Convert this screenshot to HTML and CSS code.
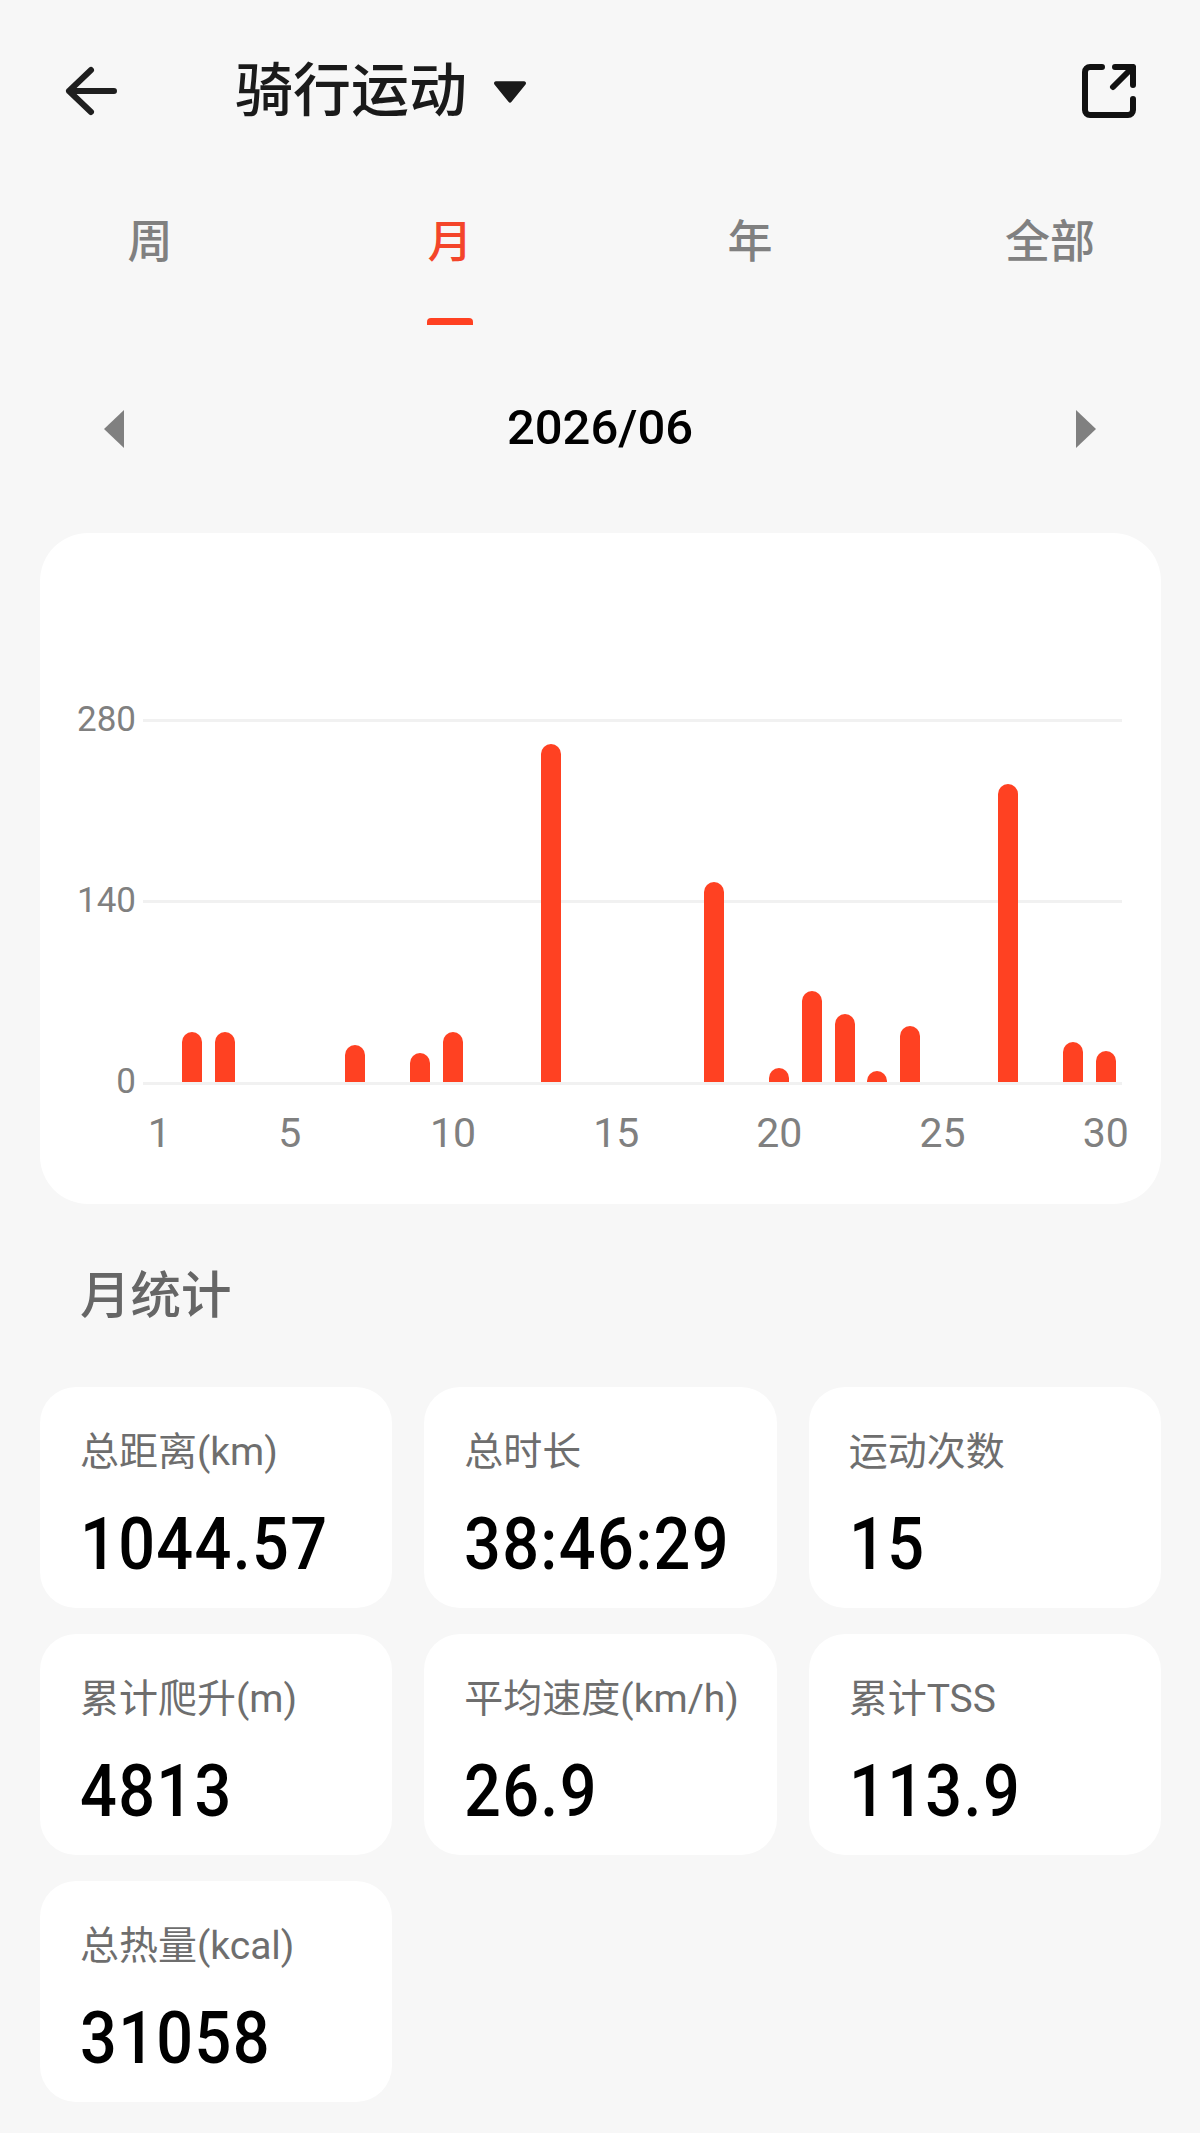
FILE: index.html
```html
<!DOCTYPE html>
<html lang="zh-CN">
  <head>
    <meta http-equiv="Content-Type" content="text/html;charset=UTF-8" />
    <title>骑行运动</title>
    <link rel="stylesheet" href="styles.css">
  </head>
  <body>
    <header class="top-bar">
      <svg class="back-icon" viewBox="0 0 57 54" aria-hidden="true">
        <path d="M28 6 L6 27 L28 48 M6 27 H51" />
      </svg>
      <h1 class="sport-title">骑行运动</h1>
      <svg class="caret-icon" viewBox="0 0 33 24" aria-hidden="true">
        <path d="M3 2 H30 a2 2 0 0 1 1.600 3.200 L18 22 a2 2 0 0 1-3 0 L1.400 5.200 A2 2 0 0 1 3 2 Z" />
      </svg>
      <svg class="share-icon" viewBox="0 0 54 54" aria-hidden="true">
        <path d="M20 3 H8 a5 5 0 0 0-5 5 V46 a5 5 0 0 0 5 5 H46 a5 5 0 0 0 5-5 V35 M33 3 H51 V21 M51 3 L31 23" />
      </svg>
    </header>

    <nav class="tabs">
      <div class="tab">周</div>
      <div class="tab tab-active">月<span class="tab-mark"></span></div>
      <div class="tab">年</div>
      <div class="tab">全部</div>
    </nav>

    <div class="date-row">
      <svg class="date-arrow" viewBox="0 0 20 38" aria-hidden="true"><path d="M20 0 V38 L0 19 Z" /></svg>
      <span class="date-text">2026/06</span>
      <svg class="date-arrow" viewBox="0 0 20 38" aria-hidden="true"><path d="M0 0 V38 L20 19 Z" /></svg>
    </div>

    <section class="chart-card">
      <div class="plot">
        <div class="axis-row"><span class="axis-label">280</span><span class="axis-line"></span></div>
        <div class="axis-row"><span class="axis-label">140</span><span class="axis-line"></span></div>
        <div class="axis-row"><span class="axis-label">0</span><span class="axis-line"></span></div>

        <div class="bars">
          <span class="bar"></span>
          <span class="bar" style="height: 49.5px"></span>
          <span class="bar" style="height: 49.5px"></span>
          <span class="bar"></span>
          <span class="bar"></span>
          <span class="bar"></span>
          <span class="bar" style="height: 36.5px"></span>
          <span class="bar"></span>
          <span class="bar" style="height: 28.5px"></span>
          <span class="bar" style="height: 49.5px"></span>
          <span class="bar"></span>
          <span class="bar"></span>
          <span class="bar" style="height: 337.5px"></span>
          <span class="bar"></span>
          <span class="bar"></span>
          <span class="bar"></span>
          <span class="bar"></span>
          <span class="bar" style="height: 200px"></span>
          <span class="bar"></span>
          <span class="bar" style="height: 13.5px"></span>
          <span class="bar" style="height: 91px"></span>
          <span class="bar" style="height: 67.5px"></span>
          <span class="bar" style="height: 10.5px"></span>
          <span class="bar" style="height: 55.5px"></span>
          <span class="bar"></span>
          <span class="bar"></span>
          <span class="bar" style="height: 297.5px"></span>
          <span class="bar"></span>
          <span class="bar" style="height: 39.5px"></span>
          <span class="bar" style="height: 30.5px"></span>
        </div>
      </div>

      <div class="days">
        <span class="day" style="grid-column: 1">1</span>
        <span class="day" style="grid-column: 5">5</span>
        <span class="day" style="grid-column: 10">10</span>
        <span class="day" style="grid-column: 15">15</span>
        <span class="day" style="grid-column: 20">20</span>
        <span class="day" style="grid-column: 25">25</span>
        <span class="day" style="grid-column: 30">30</span>
      </div>
    </section>

    <h2 class="section-title">月统计</h2>

    <main class="stats">
      <div class="stat-card">
        <div class="stat-label">总距离(km)</div>
        <div class="stat-value">1044.57</div>
      </div>
      <div class="stat-card">
        <div class="stat-label">总时长</div>
        <div class="stat-value">38:46:29</div>
      </div>
      <div class="stat-card">
        <div class="stat-label">运动次数</div>
        <div class="stat-value">15</div>
      </div>
      <div class="stat-card">
        <div class="stat-label">累计爬升(m)</div>
        <div class="stat-value">4813</div>
      </div>
      <div class="stat-card">
        <div class="stat-label">平均速度(km/h)</div>
        <div class="stat-value">26.9</div>
      </div>
      <div class="stat-card">
        <div class="stat-label">累计TSS</div>
        <div class="stat-value">113.9</div>
      </div>
      <div class="stat-card">
        <div class="stat-label">总热量(kcal)</div>
        <div class="stat-value">31058</div>
      </div>
    </main>
  </body>
</html>
```

FILE: styles.css
```css
/* Cycling stats page */

* {
  margin: 0;
  padding: 0;
  box-sizing: border-box;
}

body {
  font-family: Roboto, 'Noto Sans CJK SC', sans-serif;
  background: #f7f7f7;
  padding-bottom: 32px;
}

/* Top bar */
.top-bar {
  display: flex;
  align-items: center;
  height: 182px;
  padding: 0 64px 0 63px;
}

.back-icon {
  width: 57px;
  height: 54px;
  fill: none;
  stroke: #1f1f1f;
  stroke-width: 6;
  stroke-linecap: round;
  stroke-linejoin: round;
}

.sport-title {
  margin-left: 115px;
  font-size: 58px;
  line-height: 70px;
  font-weight: 500;
  color: #1a1a1a;
}

.caret-icon {
  width: 34px;
  height: 25px;
  margin-left: 26px;
  fill: #1a1a1a;
}

.share-icon {
  width: 54px;
  height: 54px;
  margin-left: auto;
  fill: none;
  stroke: #111;
  stroke-width: 6;
  stroke-linecap: round;
  stroke-linejoin: round;
}

/* Tabs */
.tabs {
  display: grid;
  grid-template-columns: repeat(4, 1fr);
}

.tab {
  display: flex;
  flex-direction: column;
  align-items: center;
  padding-top: 31px;
  font-size: 45px;
  line-height: 60px;
  font-weight: 500;
  color: #808080;
}

.tab-active {
  color: #f4452a;
}

.tab-mark {
  width: 46px;
  height: 7px;
  margin-top: 45px;
  border-radius: 4px 4px 0 0;
  background: #ff4122;
}

/* Date switcher */
.date-row {
  display: flex;
  align-items: center;
  justify-content: space-between;
  height: 60px;
  margin-top: 72px;
  padding: 0 104px;
}

.date-arrow {
  width: 20px;
  height: 38px;
  margin-top: 3px;
  fill: #808080;
}

.date-text {
  font-size: 49px;
  font-weight: 500;
  color: #000;
}

/* Chart */
.chart-card {
  margin: 76px 39px 0 40px;
  padding: 167.5px 39px 51px 16px;
  border-radius: 48px;
  background: #fff;
}

.plot {
  position: relative;
  display: flex;
  flex-direction: column;
  gap: 141.25px;
}

.axis-row {
  display: flex;
  align-items: center;
  height: 40px;
  gap: 7px;
}

.axis-label {
  width: 80px;
  padding-bottom: 3px;
  text-align: right;
  font-size: 35px;
  color: #808080;
}

.axis-line {
  flex: 1;
  height: 3px;
  background: #f1f1f1;
}

.bars {
  position: absolute;
  top: 0;
  left: 87px;
  right: 0;
  height: 381px;
  display: grid;
  grid-template-columns: repeat(30, minmax(0, 1fr));
  align-items: end;
  justify-items: center;
}

.bar {
  width: 20px;
  border-radius: 10px 10px 0 0;
  background: #ff4122;
}

.days {
  display: grid;
  grid-template-columns: repeat(30, minmax(0, 1fr));
  margin: 10px 0 0 87px;
  font-size: 41px;
  line-height: 40px;
  color: #808080;
}

.day {
  grid-row: 1;
  display: flex;
  justify-content: center;
  white-space: nowrap;
}

/* Monthly stats */
.section-title {
  margin: 62px 0 61px 80px;
  font-size: 50.5px;
  line-height: 60px;
  font-weight: 500;
  color: #666;
}

.stats {
  display: grid;
  grid-template-columns: repeat(3, 1fr);
  column-gap: 32px;
  row-gap: 26px;
  padding: 0 39px 0 40px;
}

.stat-card {
  height: 221px;
  padding: 40px 0 0 40px;
  border-radius: 36px;
  background: #fff;
}

.stat-label {
  font-size: 39px;
  line-height: 50px;
  color: #6e6e6e;
  white-space: nowrap;
}

/* no DIN style font here, so Roboto is narrowed to get the same digit width */
.stat-value {
  margin-top: 28px;
  font-size: 72px;
  line-height: 80px;
  font-weight: 500;
  letter-spacing: 1.5px;
  color: #000;
  transform: scaleX(0.9);
  transform-origin: left center;
}
```
